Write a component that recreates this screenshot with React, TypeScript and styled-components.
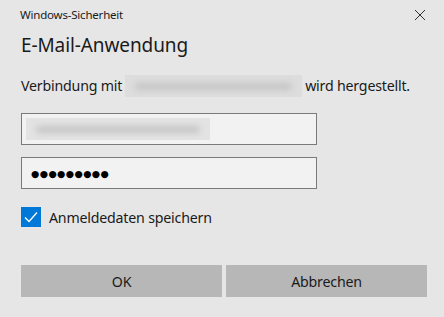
import React from 'react';
import styled, { createGlobalStyle } from 'styled-components';

const GlobalStyle = createGlobalStyle`
  html, body {
    margin: 0;
    padding: 0;
    background: #e6e6e6;
  }
  body {
    font-family: "Noto Sans", "Open Sans", sans-serif;
    color: #1a1a1a;
  }
`;

const Dialog = styled.div`
  width: 444px;
  height: 317px;
  box-sizing: border-box;
  background: #e6e6e6;
  padding: 0 17px 0 21px;
  display: flex;
  flex-direction: column;
`;

const TitleBar = styled.div`
  display: flex;
  align-items: center;
  justify-content: space-between;
  height: 28px;
  margin-left: -1px;
`;

const Caption = styled.span`
  font-size: 11.5px;
  color: #1a1a1a;
  letter-spacing: -0.2px;
`;

const CloseButton = styled.button`
  border: 0;
  background: transparent;
  padding: 0;
  width: 12px;
  height: 12px;
  display: flex;
  margin-right: 1px;
  margin-top: 1px;
`;

const Heading = styled.h1`
  margin: 4px 0 0;
  font-size: 19px;
  font-weight: 400;
  line-height: 26px;
  color: #1a1a1a;
  letter-spacing: -0.1px;
`;

const Message = styled.p`
  margin: 17px 0 0;
  font-size: 14.2px;
  line-height: 22px;
  display: flex;
  align-items: center;
  gap: 3px;
  white-space: nowrap;
  letter-spacing: -0.2px;
`;

const Redacted = styled.span<{ $width: number; $bg: string }>`
  display: inline-block;
  width: ${(p) => p.$width}px;
  height: 22px;
  background: ${(p) => p.$bg};
  overflow: hidden;
  position: relative;

  &::after {
    content: '';
    position: absolute;
    left: 10px;
    right: 10px;
    top: 8px;
    height: 7px;
    background: #c4c4c4;
    border-radius: 4px;
    filter: blur(3px);
  }
`;

const Field = styled.div<{ $top: number }>`
  margin-top: ${(p) => p.$top}px;
  width: 296px;
  height: 32px;
  box-sizing: border-box;
  border: 1px solid #7a7a7a;
  background: #f2f2f2;
  display: flex;
  align-items: center;
  padding-left: 4px;
`;

const Dots = styled.span`
  padding-left: 5px;
  padding-top: 1px;
  font-size: 9.5px;
  letter-spacing: 0.4px;
  color: #000;
  font-family: "DejaVu Sans", sans-serif;
`;

const CheckRow = styled.label`
  margin-top: 18px;
  display: flex;
  align-items: center;
  gap: 8px;
  font-size: 14.2px;
  letter-spacing: -0.2px;
`;

const Box = styled.span`
  width: 20px;
  height: 20px;
  background: #0078d7;
  display: flex;
  align-items: center;
  justify-content: center;
`;

const Buttons = styled.div`
  margin-top: 38px;
  display: grid;
  grid-template-columns: 201px 201px;
  gap: 4px;
`;

const Button = styled.button`
  height: 32px;
  border: 0;
  background: #b7b7b7;
  font-family: inherit;
  font-size: 14.2px;
  color: #1a1a1a;
  letter-spacing: -0.2px;
  padding: 0;
`;

export default function App() {
  return (
    <>
      <GlobalStyle />
      <Dialog>
        <TitleBar>
          <Caption>Windows-Sicherheit</Caption>
          <CloseButton aria-label="Schließen">
            <svg width="12" height="12" viewBox="0 0 12 12">
              <path d="M1 1 L11 11 M11 1 L1 11" stroke="#333" strokeWidth="1" fill="none" />
            </svg>
          </CloseButton>
        </TitleBar>
        <Heading>E-Mail-Anwendung</Heading>
        <Message>
          Verbindung mit <Redacted $width={177} $bg="#dddddd" /> wird hergestellt.
        </Message>
        <Field $top={16}>
          <Redacted $width={184} $bg="#e3e3e3" />
        </Field>
        <Field $top={12}>
          <Dots>●●●●●●●●●</Dots>
        </Field>
        <CheckRow>
          <Box>
            <svg width="16" height="16" viewBox="0 0 16 16">
              <path d="M2 8.5 L6 12.5 L14 3.5" stroke="#fff" strokeWidth="1.3" fill="none" />
            </svg>
          </Box>
          Anmeldedaten speichern
        </CheckRow>
        <Buttons>
          <Button>OK</Button>
          <Button>Abbrechen</Button>
        </Buttons>
      </Dialog>
    </>
  );
}
